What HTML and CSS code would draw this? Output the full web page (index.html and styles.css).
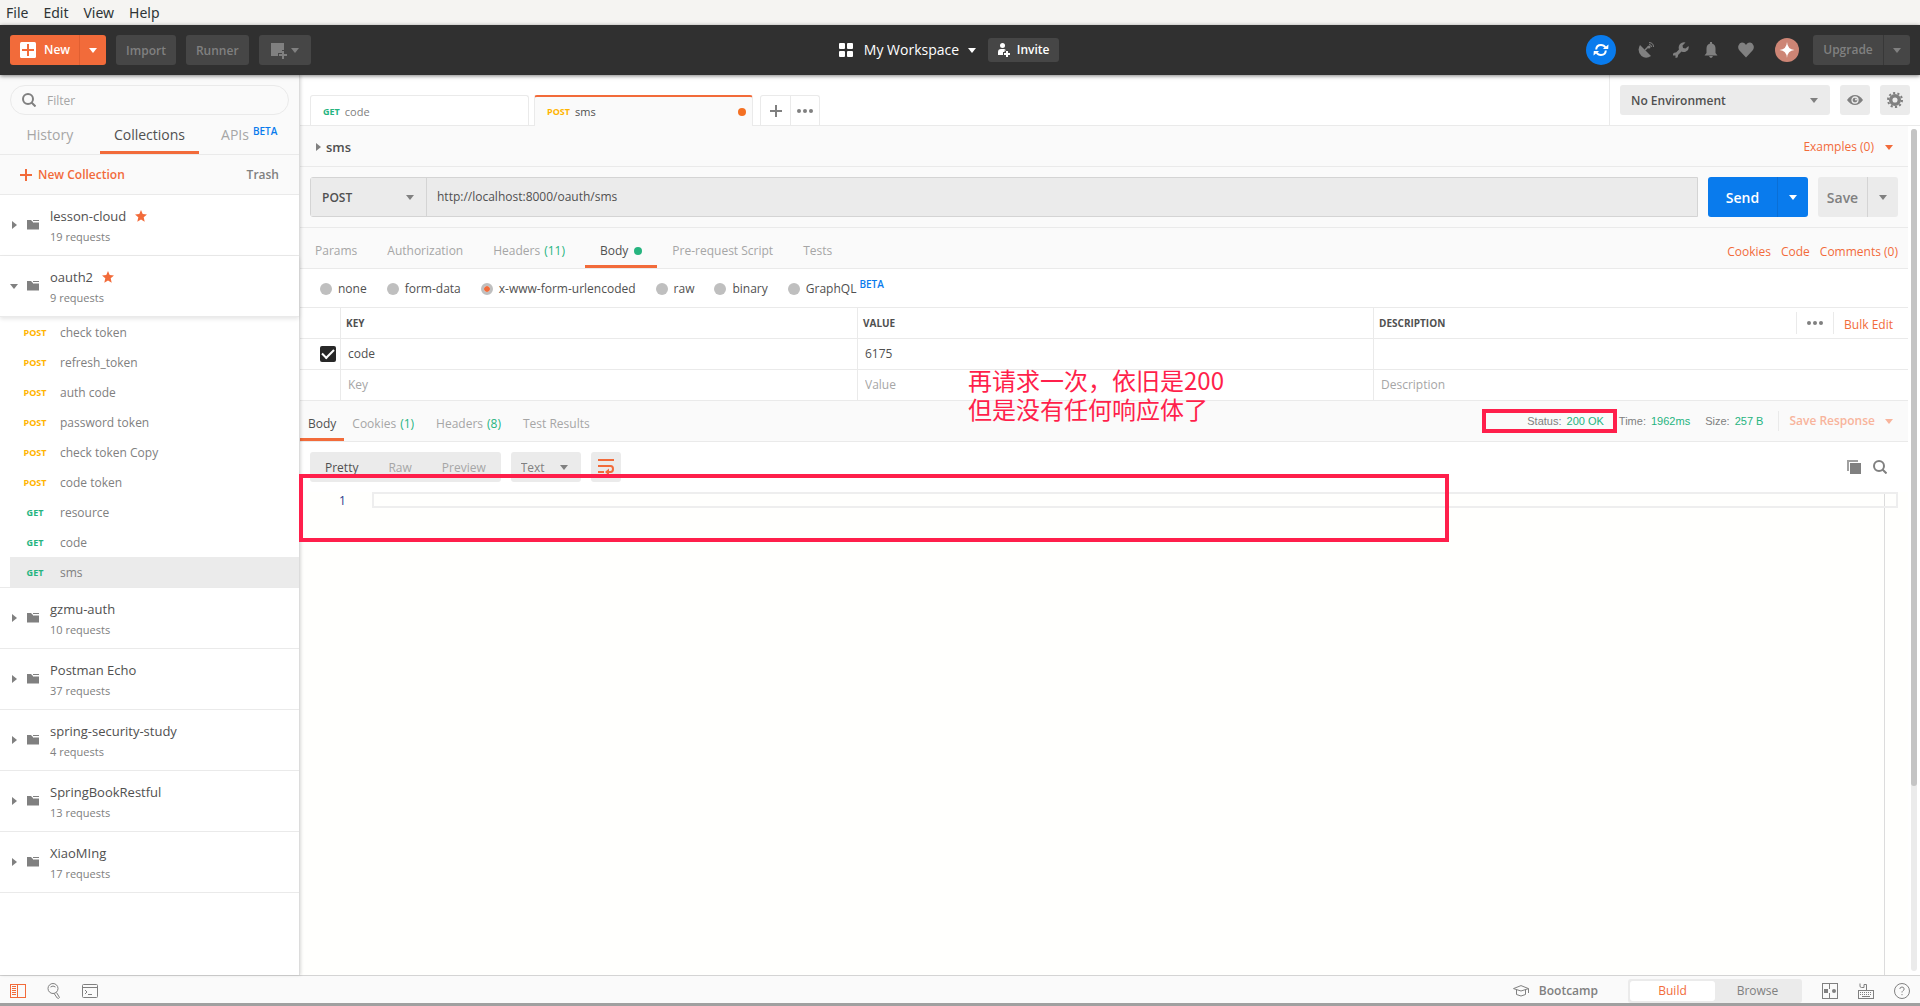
FILE: index.html
```html
<!DOCTYPE html>
<html lang="en">
<head>
<meta charset="utf-8">
<title>Postman</title>
<link rel="stylesheet" href="styles.css">
</head>
<body>
<svg class="defs" aria-hidden="true">
  <symbol id="folder" viewBox="0 0 12 10"><path d="M0 0h4l3 3h5v6H0z"/><path d="M6 0h6v1H6zM7 2h5v0.6H7z"/><path d="M0 9h12v1H0z" opacity=".5"/></symbol>
  <symbol id="star" viewBox="0 0 12 12"><path d="M6 0l1.7 4.1 4.3.3-3.3 2.9 1 4.5L6 9.400l-3.700 2.400 1-4.500L0 4.400l4.300-.3z"/></symbol>
  <symbol id="search" viewBox="0 0 14 14"><circle cx="6" cy="6" r="5" fill="none" stroke="currentColor" stroke-width="2"/><path d="M9.500 9.500l4 4" stroke="currentColor" stroke-width="2"/></symbol>
  <symbol id="dots" viewBox="0 0 16 4"><circle cx="2" cy="2" r="2"/><circle cx="8" cy="2" r="2"/><circle cx="14" cy="2" r="2"/></symbol>
</svg>

<nav class="menubar"><a href="#">File</a><a href="#">Edit</a><a href="#">View</a><a href="#">Help</a></nav>

<header class="header">
  <div class="header-left">
    <div class="split new">
      <button><svg width="16" height="16" viewBox="0 0 16 16"><rect width="16" height="16" rx="1.500" fill="#fff"/><path d="M8 2v12M2 8h12" stroke="#f26b3a" stroke-width="2"/></svg>New</button>
      <button class="drop" aria-label="New menu"><i class="caret"></i></button>
    </div>
    <button class="dark">Import</button>
    <button class="dark">Runner</button>
    <button class="dark window" aria-label="New window"><svg width="16" height="16" viewBox="0 0 16 16"><path d="M0 0h13v7h-2v3H7v3H0z"/><path d="M11 8h2v3h3v2h-3v3h-2v-3H8v-2h3z"/></svg><i class="caret"></i></button>
  </div>
  <div class="header-mid">
    <button class="workspace"><svg width="14" height="14" viewBox="0 0 14 14"><rect width="6" height="6" rx="1"/><rect x="8" width="6" height="6" rx="1"/><rect y="8" width="6" height="6" rx="1"/><rect x="8" y="8" width="6" height="6" rx="1"/></svg>My Workspace<i class="caret"></i></button>
    <button class="invite"><svg width="12" height="14" viewBox="0 0 12 14"><circle cx="4.500" cy="2.500" r="2.500"/><path d="M0 12V9q0-3 3-3h3q1.500 0 2 1.500H6.500V9H5v3z"/><path d="M8 8h2v2h2v2h-2v2H8v-2H6v-2h2z"/></svg>Invite</button>
  </div>
  <div class="header-right">
    <button class="sync" aria-label="Sync"><svg width="16" height="16" viewBox="0 0 16 16" fill="none" stroke="#fff" stroke-width="2"><path d="M3.200 7.500Q3.500 3 8 3q3 0 4.500 2.500M12.800 8.500Q12.500 13 8 13q-3 0-4.500-2.500"/><path d="M9.800 7h5.400l.3-4.500zM6.200 9H.800L.500 13.500z" fill="#fff" stroke="none"/></svg></button>
    <button class="hi" aria-label="Capture"><svg width="16" height="16" viewBox="0 0 16 16"><path d="M2 3l11 11Q8 17.500 3.500 14 -1.500 9 2 3z"/><path d="M7 8l3.500-3.500" stroke="currentColor" stroke-width="1.500"/><circle cx="11" cy="5" r="1.500"/><path d="M11 2.500q2.500 0 2.500 2.500M11 .600q4.500 0 4.500 4.400" fill="none" stroke="currentColor" stroke-width="1"/></svg></button>
    <button class="hi near" aria-label="Settings"><svg width="16" height="16" viewBox="0 0 16 16"><path d="M12.500.500L9.500 3.500l.5 2.500 2.500.500 3-2.500Q16.500 8 13 9.500q-2 1-4.500 0L5 13q.5 3-2.500 3v-2.500H0q-.500-3.500 3-3L6 7.500Q5 4.500 7 2q2.500-2.500 5.500-1.500z"/></svg></button>
    <button class="hi" aria-label="Notifications"><svg width="14" height="16" viewBox="0 0 14 16"><path d="M6 0h2v1.500q3.500 1 3.500 5V11l2 2.500H.500l2-2.500V6.500q0-4 3.500-5zM5 14h4q-2 4-4 0z"/></svg></button>
    <button class="hi" aria-label="Favorites"><svg width="16" height="16" viewBox="0 0 16 16"><path d="M8 15.500L1.500 8.500Q-.500 6 .500 3.500 2-.500 5.500.800 7 1.300 8 3 9 1.300 10.500.800 14-.500 15.500 3.500q1 2.500-1 5z"/></svg></button>
    <button class="avatar" aria-label="Account"><svg width="24" height="24" viewBox="0 0 24 24"><path d="M12 4q.5 7.500 7.500 8-7 .5-7.500 8-.5-7.500-7.500-8Q11.500 11.500 12 4z" fill="#fff"/></svg></button>
    <div class="split upgrade"><button>Upgrade</button><button class="drop" aria-label="Upgrade menu"><i class="caret"></i></button></div>
  </div>
</header>

<div class="body">
  <aside class="sidebar">
    <div class="side-top">
      <label class="filter"><svg width="14" height="14"><use href="#search"/></svg><input type="text" placeholder="Filter" aria-label="Filter"></label>
      <div class="side-tabs"><button>History</button><button class="on">Collections</button><button>APIs<sup>BETA</sup></button></div>
      <div class="side-actions"><button class="new-col"><svg width="12" height="12" viewBox="0 0 12 12"><path d="M6 0v12M0 6h12" stroke="currentColor" stroke-width="2"/></svg>New Collection</button><button class="trash">Trash</button></div>
    </div>
    <ul class="collections">
      <li class="col"><i class="caret right"></i><svg width="12" height="10"><use href="#folder"/></svg><div><h3>lesson-cloud<svg class="star" width="12" height="12"><use href="#star"/></svg></h3><p>19 requests</p></div></li>
      <li class="col open"><i class="caret"></i><svg width="12" height="10"><use href="#folder"/></svg><div><h3>oauth2<svg class="star" width="12" height="12"><use href="#star"/></svg></h3><p>9 requests</p></div></li>
      <li>
        <ul class="requests">
          <li><b class="post">POST</b>check token</li>
          <li><b class="post">POST</b>refresh_token</li>
          <li><b class="post">POST</b>auth code</li>
          <li><b class="post">POST</b>password token</li>
          <li><b class="post">POST</b>check token Copy</li>
          <li><b class="post">POST</b>code token</li>
          <li><b class="get">GET</b>resource</li>
          <li><b class="get">GET</b>code</li>
          <li class="on"><b class="get">GET</b>sms</li>
        </ul>
      </li>
      <li class="col"><i class="caret right"></i><svg width="12" height="10"><use href="#folder"/></svg><div><h3>gzmu-auth</h3><p>10 requests</p></div></li>
      <li class="col"><i class="caret right"></i><svg width="12" height="10"><use href="#folder"/></svg><div><h3>Postman Echo</h3><p>37 requests</p></div></li>
      <li class="col"><i class="caret right"></i><svg width="12" height="10"><use href="#folder"/></svg><div><h3>spring-security-study</h3><p>4 requests</p></div></li>
      <li class="col"><i class="caret right"></i><svg width="12" height="10"><use href="#folder"/></svg><div><h3>SpringBookRestful</h3><p>13 requests</p></div></li>
      <li class="col"><i class="caret right"></i><svg width="12" height="10"><use href="#folder"/></svg><div><h3>XiaoMIng</h3><p>17 requests</p></div></li>
    </ul>
  </aside>

  <main class="main">
    <div class="topbar">
      <div class="tabs">
        <button class="tab"><b class="get">GET</b>code</button>
        <button class="tab on"><b class="post">POST</b>sms<span class="unsaved"></span></button>
        <div class="tab-tools">
          <button aria-label="New tab"><svg width="12" height="12" viewBox="0 0 12 12"><path d="M6 0v12M0 6h12" stroke="currentColor" stroke-width="2"/></svg></button>
          <button aria-label="Tab options"><svg width="16" height="4"><use href="#dots"/></svg></button>
        </div>
      </div>
      <div class="env">
        <div class="select"><select aria-label="Environment"><option>No Environment</option></select><i class="caret"></i></div>
        <button aria-label="Environment quick look"><svg width="16" height="10" viewBox="0 0 16 10"><path d="M0 5q3.500-5 8-5t8 5q-3.500 5-8 5T0 5z"/><circle cx="8" cy="5" r="3" fill="none" stroke="#ebebeb" stroke-width="1.300"/><circle cx="9" cy="4.500" r="1" fill="#ebebeb"/></svg></button>
        <button aria-label="Manage environments"><svg width="16" height="16" viewBox="0 0 16 16"><circle cx="8" cy="8" r="4.300" fill="none" stroke="currentColor" stroke-width="3.500"/><circle cx="8" cy="8" r="7" fill="none" stroke="currentColor" stroke-width="2" stroke-dasharray="2.200 2.198"/></svg></button>
      </div>
    </div>

    <div class="below">
      <div class="content">
        <div class="name-row"><button class="name"><i class="caret right"></i>sms</button><button class="examples">Examples (0)<i class="caret"></i></button></div>
        <div class="url-row">
          <div class="url">
            <div class="select"><select aria-label="Method"><option>POST</option></select><i class="caret"></i></div>
            <input type="text" value="http://localhost:8000/oauth/sms" aria-label="Request URL">
          </div>
          <div class="split send"><button>Send</button><button class="drop" aria-label="Send options"><i class="caret"></i></button></div>
          <div class="split save"><button>Save</button><button class="drop" aria-label="Save options"><i class="caret"></i></button></div>
        </div>
        <div class="req-tabs">
          <div class="tablist"><button>Params</button><button>Authorization</button><button class="headers">Headers <em>(11)</em></button><button class="on">Body<span class="dot"></span></button><button>Pre-request Script</button><button>Tests</button></div>
          <div class="links"><a href="#">Cookies</a><a href="#">Code</a><a href="#">Comments (0)</a></div>
        </div>
        <div class="types">
          <label><input type="radio" name="type">none</label>
          <label><input type="radio" name="type">form-data</label>
          <label><input type="radio" name="type" checked>x-www-form-urlencoded</label>
          <label><input type="radio" name="type">raw</label>
          <label><input type="radio" name="type">binary</label>
          <label><input type="radio" name="type">GraphQL<sup>BETA</sup></label>
        </div>
        <table class="params">
          <thead><tr><th></th><th>KEY</th><th>VALUE</th><th>DESCRIPTION<span class="th-tools"><button aria-label="Columns"><svg width="16" height="4"><use href="#dots"/></svg></button><a href="#">Bulk Edit</a></span></th></tr></thead>
          <tbody>
            <tr><td><input type="checkbox" checked aria-label="Enabled"></td><td><input type="text" value="code" aria-label="Key"></td><td><input type="text" value="6175" aria-label="Value"></td><td><input type="text" aria-label="Description"></td></tr>
            <tr><td></td><td><input type="text" placeholder="Key" aria-label="New key"></td><td><input type="text" placeholder="Value" aria-label="New value"></td><td><input type="text" placeholder="Description" aria-label="New description"></td></tr>
          </tbody>
        </table>
        <div class="res-tabs">
          <div class="tablist"><button class="on">Body</button><button>Cookies <em>(1)</em></button><button>Headers <em>(8)</em></button><button>Test Results</button></div>
          <div class="meta"><span>Status: <em>200 OK</em></span><span>Time: <em>1962ms</em></span><span>Size: <em>257 B</em></span><button class="save-res">Save Response<i class="caret"></i></button></div>
        </div>
        <div class="view-bar">
          <div class="modes"><button class="on">Pretty</button><button>Raw</button><button>Preview</button></div>
          <div class="select"><select aria-label="Format"><option>Text</option></select><i class="caret"></i></div>
          <button class="wrap" aria-label="Wrap lines"><svg width="16" height="16" viewBox="0 0 16 16" fill="none" stroke="currentColor" stroke-width="2"><path d="M0 1h16M0 7h12.500a2.500 3 0 0 1 0 6H9M0 13h6"/><path d="M11 9.500v7L7 13z" fill="currentColor" stroke="none"/></svg></button>
          <div class="view-tools">
            <button aria-label="Copy"><svg width="14" height="14" viewBox="0 0 14 14"><rect x="3" y="3" width="11" height="11"/><path d="M11 1H1v10" fill="none" stroke="currentColor" stroke-width="2" opacity=".75"/></svg></button>
            <button aria-label="Search response"><svg width="14" height="14"><use href="#search"/></svg></button>
          </div>
        </div>
        <div class="editor"><span class="line-no">1</span><div class="code"><div class="line"></div></div></div>
      </div>
      <div class="scroll"><div class="track"><div class="thumb"></div></div></div>
    </div>
    <p class="note">再请求一次，依旧是200<br>但是没有任何响应体了</p>
    <div class="mark mark-status"></div>
    <div class="mark mark-body"></div>
  </main>
</div>

<footer class="footer">
  <div class="foot-left">
    <button class="orange" aria-label="Toggle sidebar"><svg width="16" height="14" viewBox="0 0 16 14" fill="none" stroke="currentColor"><rect x=".5" y=".5" width="15" height="13"/><path d="M7.500 0v14M2 2.500h4M2 4.500h4M2 6.500h4M2 8.500h4M2 10.500h4"/></svg></button>
    <button aria-label="Find"><svg width="14" height="16" viewBox="0 0 14 16" fill="none" stroke="currentColor"><circle cx="6" cy="5.500" r="5"/><path d="M3.500 4Q6 2 8.500 4M7 10.300l3.200 4.700q1.500 1 2.300-.500L9.500 9.500"/></svg></button>
    <button aria-label="Console"><svg width="16" height="14" viewBox="0 0 16 14" fill="none" stroke="currentColor"><rect x=".5" y=".5" width="15" height="13" rx="1"/><path d="M0 3.500h16M3 6l2 2-2 2M6 10.500h4"/></svg></button>
  </div>
  <div class="foot-right">
    <button class="bootcamp"><svg width="16" height="12" viewBox="0 0 16 12" fill="none" stroke="currentColor"><path d="M8 .600l7.500 3L8 6 .500 3.600zM3.500 5v4.500q4.500 3 9 0V5M15.500 3.600V8"/></svg>Bootcamp</button>
    <div class="segment"><button class="on">Build</button><button>Browse</button></div>
    <button aria-label="Two pane"><svg width="16" height="16" viewBox="0 0 16 16" fill="none" stroke="currentColor"><rect x=".5" y=".5" width="15" height="15"/><path d="M7.500 0v6M7.500 10v6"/><rect x="2" y="6" width="4" height="4" fill="currentColor" stroke="none"/><circle cx="12" cy="8" r="2" fill="currentColor" stroke="none"/></svg></button>
    <button aria-label="Shortcuts"><svg width="16" height="16" viewBox="0 0 16 16" fill="none" stroke="currentColor"><rect x=".5" y="7.500" width="15" height="8"/><path d="M2 9.500h12M2 11.500h12" stroke-dasharray="1 1"/><path d="M4 13.500h8M8.500 7V1.500H6V4.500H3.500Q2 4.500 2 3V.500"/></svg></button>
    <button aria-label="Help"><svg width="16" height="16" viewBox="0 0 16 16" fill="none" stroke="currentColor"><circle cx="8" cy="8" r="7.500"/><path d="M5.800 6q.2-2 2.200-2t2.200 2q0 1-1.200 1.700-1 .6-1 1.800M8 11v1.200"/></svg></button>
  </div>
</footer>
</body>
</html>
```
FILE: styles.css
```css
* { box-sizing: border-box; }

body {
  margin: 0;
  min-height: 100vh;
  display: flex;
  flex-direction: column;
  font: 12px/18px "Open Sans", "Noto Sans", "Noto Sans CJK SC", sans-serif;
  color: #505050;
  background: #fff;
}

button, input, select {
  font: inherit;
  color: inherit;
  background: none;
  border: 0;
  padding: 0;
  margin: 0;
}

button { display: flex; align-items: center; justify-content: center; white-space: nowrap; }
select { appearance: none; }
input { min-width: 0; }
a { color: inherit; text-decoration: none; }
ul { list-style: none; margin: 0; padding: 0; }
h3, p { margin: 0; font-weight: 400; }
em { font-style: normal; color: #26b47f; }
svg { display: block; flex: none; }
svg:not([fill]) { fill: currentColor; }
sup { font-size: 10px; line-height: 10px; font-weight: 600; color: #097bed; vertical-align: baseline; }

.defs { position: absolute; width: 0; height: 0; }

.caret {
  flex: none;
  width: 0;
  height: 0;
  border: 4px solid transparent;
  border-top: 5px solid currentColor;
  border-bottom: 0;
}
.caret.right {
  border: 4px solid transparent;
  border-left: 5px solid currentColor;
  border-right: 0;
}

.get, .post { font-size: 9px; font-weight: 700; color: #26b47f; }
.post { color: #ffb400; }

.select { display: grid; align-items: center; background: #ebebeb; border-radius: 3px; }
.select > * { grid-area: 1 / 1; }
.select select { width: 100%; height: 100%; padding-top: 2px; font-weight: 600; }
.select .caret { justify-self: end; color: #808080; pointer-events: none; }

/* Menu bar */
.menubar {
  height: 25px;
  padding: 0 6px;
  display: flex;
  align-items: center;
  gap: 15px;
  font: 14px/25px "Noto Sans", sans-serif;
  color: #2e3436;
  background: #f5f4f2;
}

/* Header */
.header {
  position: relative;
  z-index: 2;
  height: 50px;
  padding: 0 10px;
  display: grid;
  grid-template-columns: 1fr auto 1fr;
  align-items: center;
  background: #303030;
  box-shadow: 0 1px 4px rgba(0, 0, 0, .5);
  color: #fff;
}
.header-left, .header-mid, .header-right { display: flex; align-items: center; }
.header-left { gap: 10px; }
.header-mid { gap: 12px; padding-right: 22px; }
.header-right { justify-content: flex-end; color: #808080; }

.split { display: flex; border-radius: 3px; overflow: hidden; font-weight: 600; }
.new { height: 30px; background: #f26b3a; }
.new button { gap: 8px; padding: 0 9px 0 10px; }
.new .drop { width: 27px; padding: 0; border-left: 1px solid #e05f31; }
.dark { height: 30px; padding: 1px 10px 0; border-radius: 3px; background: #464646; color: #808080; font-weight: 600; }
.window { gap: 4px; width: 52px; }
.workspace { font-size: 14px; gap: 11px; }
.workspace .caret { margin-left: -2px; }
.invite { height: 24px; width: 71px; gap: 7px; border-radius: 3px; background: #464646; font-weight: 600; }
.sync { width: 30px; height: 30px; margin-right: 20px; border-radius: 50%; background: #097bed; }
.hi { width: 20px; height: 30px; margin-right: 15px; }
.near { margin-right: 10px; }
.avatar { width: 24px; height: 24px; margin: 0 14px 0 4px; border-radius: 50%; background: #cd8575; }
.upgrade { height: 30px; width: 97px; background: #464646; }
.upgrade button { flex: 1; }
.upgrade .drop { flex: none; width: 27px; border-left: 1px solid #383838; }

/* Sidebar */
.body { flex: 1; display: flex; }
.sidebar {
  flex: none;
  width: 300px;
  position: relative;
  z-index: 1;
  border-right: 1px solid #dcdcdc;
  box-shadow: 1px 0 3px rgba(0, 0, 0, .15);
  background: #fff;
}
.side-top { background: #fafafa; padding-top: 10px; }
.side-top > * { border-bottom: 1px solid #eaeaea; }
.side-top .filter {
  height: 30px;
  margin: 0 10px;
  padding: 0 11px;
  display: flex;
  align-items: center;
  gap: 11px;
  border: 1px solid #eaeaea;
  border-radius: 15px;
  color: #808080;
}
.filter input { padding-top: 2px; }
.side-tabs { display: flex; height: 40px; font-size: 14px; color: #a6a6a6; }
.side-tabs button { flex: 1; padding-top: 4px; border-bottom: 3px solid transparent; }
.side-tabs .on { color: #505050; border-color: #f26b3a; }
.side-tabs sup { align-self: flex-start; margin: 7px 0 0 4px; }
.side-actions { display: flex; justify-content: space-between; height: 40px; padding: 0 20px; font-weight: 600; color: #808080; }
.side-actions button { gap: 6px; }
.side-actions .new-col { color: #f26b3a; }

::placeholder { color: #a6a6a6; opacity: 1; }

.col { display: flex; align-items: center; height: 61px; padding: 0 12px; border-bottom: 1px solid #eaeaea; color: #808080; }
.col > .caret { margin-right: 10px; }
.col.open { padding-left: 10px; position: relative; box-shadow: 0 2px 4px rgba(0, 0, 0, .1); }
.col.open > .caret { margin-right: 9px; }
.col > svg { margin-right: 11px; }
.col > div { padding-top: 3px; }
.col h3 { display: flex; align-items: center; gap: 9px; font-size: 13px; line-height: 20px; color: #505050; }
.col p { margin-top: 1px; font-size: 11px; line-height: 20px; color: #808080; }
.star { color: #f26b3a; }

.requests { padding-left: 10px; border-bottom: 1px solid #eaeaea; color: #808080; }
.requests li { display: flex; align-items: center; height: 30px; padding-top: 2px; }
.requests b { width: 50px; text-align: center; }
.requests .on { background: #ebebeb; }

/* Tabs bar */
.main { flex: 1; min-width: 0; position: relative; display: flex; flex-direction: column; }
.topbar { display: flex; height: 51px; justify-content: space-between; border-bottom: 1px solid #eaeaea; }
.tabs { display: flex; align-items: flex-end; padding-left: 10px; }
.tab {
  width: 219px;
  height: 30px;
  padding: 3px 6px 0 12px;
  margin-right: 5px;
  justify-content: flex-start;
  gap: 5px;
  border: 1px solid #eaeaea;
  border-bottom: 0;
  border-radius: 3px 3px 0 0;
  font-size: 11px;
  color: #808080;
}
.tab.on { height: 31px; padding-top: 1px; margin-bottom: -1px; border-top: 2px solid #f26b3a; background: #fafafa; color: #505050; }
.unsaved { width: 8px; height: 8px; margin: 0 0 1px auto; border-radius: 50%; background: #f47023; }
.tab-tools { display: flex; margin-left: 2px; border: 1px solid #eaeaea; border-bottom: 0; border-radius: 3px 3px 0 0; color: #808080; }
.tab-tools button { width: 29px; height: 29px; }
.tab-tools button + button { border-left: 1px solid #eaeaea; }
.env { display: flex; align-items: center; gap: 10px; padding: 0 10px; border-left: 1px solid #eaeaea; }
.env .select { width: 210px; height: 30px; padding: 0 12px 0 11px; }
.env button { width: 30px; height: 30px; border-radius: 3px; background: #ebebeb; color: #808080; }

/* Request */
.below { flex: 1; display: flex; }
.content { flex: 1; min-width: 0; display: flex; flex-direction: column; }
.name-row { display: flex; justify-content: space-between; height: 41px; padding: 1px 15px 0 16px; background: #fafafa; border-bottom: 1px solid #eaeaea; }
.name { gap: 5px; font-size: 13px; font-weight: 600; }
.name .caret { color: #808080; }
.examples { gap: 11px; padding-top: 1px; color: #f26b3a; }
.url-row { display: flex; gap: 10px; padding: 10px; background: #fafafa; border-bottom: 1px solid #eaeaea; }
.url { flex: 1; display: flex; height: 40px; border: 1px solid #d4d4d4; border-radius: 3px 0 0 3px; background: #ebebeb; }
.url .select { width: 116px; padding: 0 12px 0 11px; border-right: 1px solid #d4d4d4; border-radius: 0; }
.url input { flex: 1; padding: 0 10px; }
.send, .save { height: 40px; font-size: 14px; }
.send { width: 100px; background: #097bed; color: #fff; }
.send button:first-child, .save button:first-child { flex: 1; padding-top: 1px; }
.send .drop { width: 31px; border-left: 1px solid #0a6fd6; }
.save { width: 80px; background: #ebebeb; color: #808080; }
.save .drop { width: 31px; border-left: 1px solid #d4d4d4; }

.req-tabs, .res-tabs { display: flex; justify-content: space-between; height: 41px; background: #fafafa; border-bottom: 1px solid #eaeaea; }
.tablist { display: flex; color: #a6a6a6; }
.tablist button { padding: 8px 15px 0; border-bottom: 3px solid transparent; gap: 4px; }
.tablist .on { color: #505050; border-color: #f26b3a; }
.tablist .headers { margin-right: 5px; }
.dot { width: 8px; height: 8px; margin-left: 2px; border-radius: 50%; background: #26b47f; }
.links { display: flex; align-items: center; gap: 10px; padding: 8px 10px 0 0; color: #f26b3a; }

.types { display: flex; align-items: center; gap: 20px; height: 39px; padding: 1px 0 0 20px; border-bottom: 1px solid #eaeaea; }
.types label { display: flex; align-items: center; gap: 6px; }
.types sup { margin: -10px 0 0 -3px; }
.types input { appearance: none; width: 12px; height: 12px; border-radius: 50%; background: #bfbfbf; }
.types input:checked { border: 3px solid #bfbfbf; background: #f26b3a; background-clip: padding-box; }

.params { display: block; }
.params thead, .params tbody { display: block; }
.params tr { display: grid; grid-template-columns: 40px 517fr 516fr 535fr; height: 31px; border-bottom: 1px solid #eaeaea; }
.params th, .params td { display: flex; align-items: center; padding: 0; }
.params th + th, .params td + td { border-left: 1px solid #eaeaea; }
.params th { padding-left: 5px; font-size: 10px; font-weight: 700; text-align: left; }
.params td + td { padding-left: 7px; }
.params input[type=text] { width: 100%; }
.params input[type=checkbox] {
  appearance: none;
  width: 16px;
  height: 16px;
  margin-left: 20px;
  border-radius: 2px;
  background: #282828;
  display: grid;
  place-items: center;
}
.params input[type=checkbox]::before { content: ""; width: 10px; height: 5px; margin-top: -3px; border: solid #fff; border-width: 0 0 2px 2px; transform: rotate(-45deg); }
.th-tools { display: flex; align-items: center; margin-left: auto; padding-right: 15px; font-size: 12px; font-weight: 400; color: #f26b3a; }
.th-tools button { height: 22px; padding: 0 10px; border: solid #eaeaea; border-width: 0 1px; color: #808080; }
.th-tools a { padding: 4px 0 0 10px; }

/* Response */
.res-tabs .tablist button { padding: 8px 14px 0 8px; }
.res-tabs .tablist .on { padding: 8px 8px 0; }
.meta { display: flex; align-items: center; gap: 15px; padding-right: 15px; font: 11px/20px "Liberation Sans", sans-serif; color: #808080; }
.meta em { margin-left: 2px; }
.save-res { height: 20px; gap: 10px; padding-left: 10px; border-left: 1px solid #eaeaea; font: 600 12px/18px "Open Sans", sans-serif; color: #f8b49c; }
.view-bar { display: flex; gap: 10px; padding: 10px; height: 50px; }
.modes { display: flex; border-radius: 3px; background: #ebebeb; color: #a6a6a6; }
.modes button { padding: 2px 15px 0; }
.modes .on { color: #505050; }
.view-bar .select { width: 70px; padding: 0 13px 0 10px; color: #808080; }
.view-bar .select select { font-weight: 400; }
.wrap { width: 30px; border-radius: 3px; background: #ebebeb; color: #f26b3a; }
.view-tools { display: flex; gap: 12px; margin-left: auto; padding-right: 11px; color: #808080; }
.editor { flex: 1; display: flex; padding: 0 10px; background: #fffffd; }
.line-no { width: 62px; padding-left: 29px; line-height: 17px; color: #2a3a8c; }
.code { flex: 1; background: linear-gradient(#dcdcdc, #dcdcdc) right 13px top / 1px 100% no-repeat; }
.line { height: 16px; border: 2px solid #eee; }

.scroll { width: 12px; padding: 3px 3px 4px; }
.track { height: 100%; border-radius: 3px; background: #ebebeb; }
.thumb { height: 78%; border-radius: 3px; background: #c4c4c4; }

/* Annotations drawn over the page */
.note { position: absolute; left: 668px; top: 290px; font: 24px/29px "Noto Sans CJK SC", sans-serif; color: #ff1f4b; }
.mark { position: absolute; border: 4px solid #ff1f4b; z-index: 2; }
.mark-status { right: 303px; top: 334px; width: 135px; height: 24px; }
.mark-body { left: -1px; top: 399px; width: 1150px; height: 68px; }

/* Footer */
.footer {
  height: 31px;
  padding: 3px 10px 0;
  display: flex;
  justify-content: space-between;
  border-top: 1px solid #d4d4d4;
  border-bottom: 3px solid #a0a0a0;
  background: #fafafa;
  color: #808080;
}
.foot-left, .foot-right { display: flex; align-items: center; }
.foot-left { gap: 21px; }
.foot-right { gap: 20px; }
.orange { color: #f26b3a; }
.bootcamp { gap: 10px; margin-right: 10px; font-weight: 600; }
.segment { display: flex; height: 24px; width: 174px; padding: 2px; border-radius: 3px; background: #ebebeb; }
.segment button { flex: 1; border-radius: 3px; }
.segment .on { background: #fff; color: #f26b3a; }
```
